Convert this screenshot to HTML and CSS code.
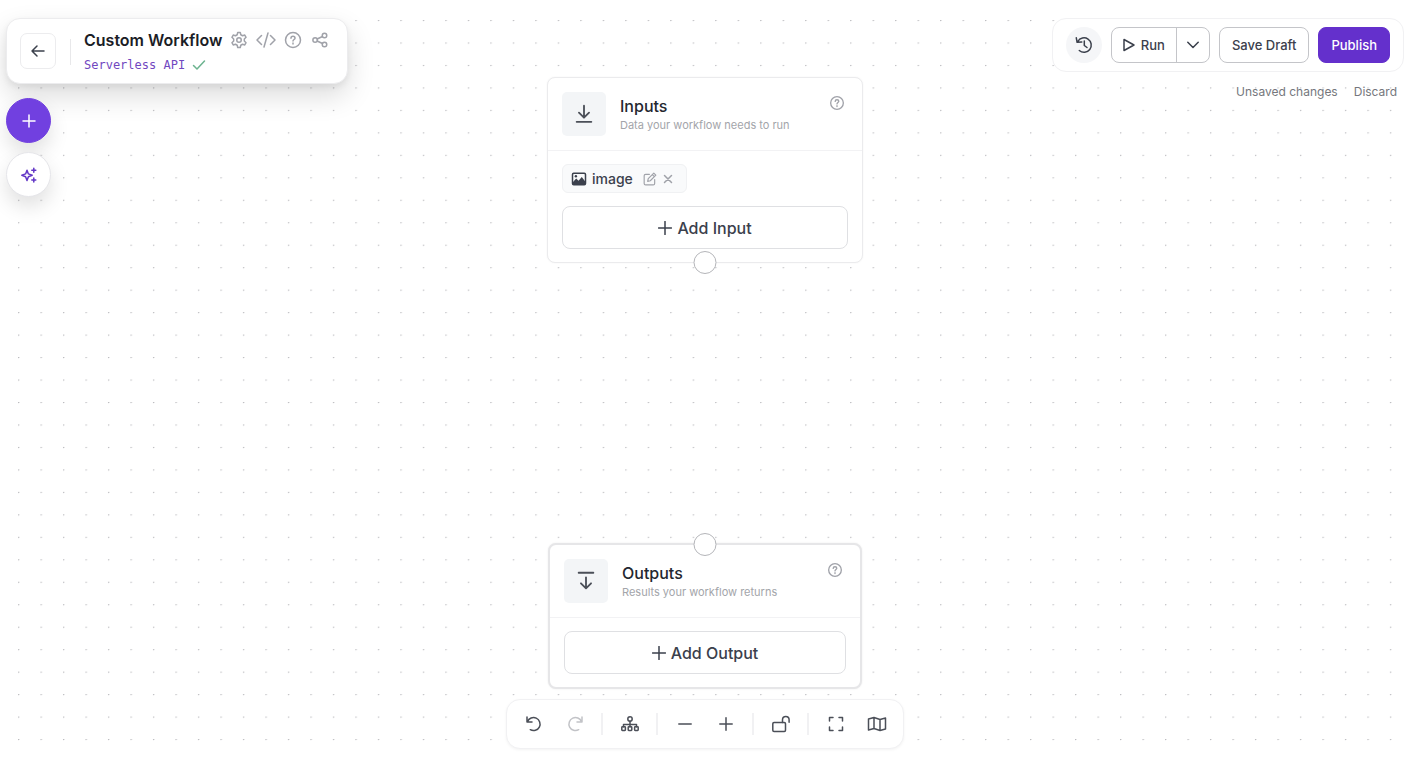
FILE: index.html
```html
<!DOCTYPE html>
<html lang="en">
<head>
<meta charset="utf-8">
<meta name="viewport" content="width=device-width, initial-scale=1">
<title>Custom Workflow</title>
<link rel="stylesheet" href="styles.css">
</head>
<body>
<main class="canvas">
  <svg class="grid" aria-hidden="true">
    <defs>
      <pattern id="dots" x="18" y="20" width="22.49" height="22.47" patternUnits="userSpaceOnUse">
        <circle cx="0.7" cy="0.5" r="0.7" fill="#b4b4b8"/>
      </pattern>
    </defs>
    <rect width="100%" height="100%" fill="url(#dots)"/>
  </svg>

  <section class="node node-inputs">
    <header class="node-head">
      <span class="node-icon">
        <svg width="22" height="22" viewBox="0 0 24 24"><path d="M12 3v12.500M6.500 10.500 12 16l5.500-5.500M4 20.500h16"/></svg>
      </span>
      <div class="node-title">
        <h2>Inputs</h2>
        <p>Data your workflow needs to run</p>
      </div>
      <button class="icon-btn help" aria-label="About inputs">
        <svg width="16" height="16" viewBox="0 0 24 24"><circle cx="12" cy="12" r="9.500"/><path d="M9.300 9.600c0-1.500 1.200-2.500 2.700-2.500s2.700 1 2.700 2.400c0 1.700-2.700 2-2.700 3.900M12 16v1.200"/></svg>
      </button>
    </header>
    <div class="node-body">
      <div class="chip">
        <svg class="chip-image" width="16" height="16" viewBox="0 0 16 16"><rect x="1.500" y="2.200" width="13" height="11.600" rx="1.200"/><path class="solid" d="M2 13v-2l3.200-3.500 2.300 2.200L10.800 6l3.400 4.500V13z"/><circle class="solid" cx="4.900" cy="5.300" r="1.200"/></svg>
        <span class="chip-name">image</span>
        <button class="icon-btn" aria-label="Edit image">
          <svg width="14" height="14" viewBox="0 0 24 24"><path d="M11 4H4.500A2.500 2.500 0 0 0 2 6.500v13A2.500 2.500 0 0 0 4.500 22h13a2.500 2.500 0 0 0 2.500-2.500V13M8 16l1-4.500L18.500 2 22 5.500 12.500 15zM16 4.500 19.500 8"/></svg>
        </button>
        <button class="icon-btn" aria-label="Remove image">
          <svg width="12" height="12" viewBox="0 0 12 12"><path d="m2.500 2.500 7 7m0-7-7 7"/></svg>
        </button>
      </div>
      <button class="add">
        <svg width="14" height="14" viewBox="0 0 14 14"><path d="M7 .5v13M.5 7h13"/></svg>Add Input
      </button>
    </div>
    <span class="handle handle-bottom"></span>
  </section>

  <section class="node node-outputs">
    <header class="node-head">
      <span class="node-icon">
        <svg width="22" height="22" viewBox="0 0 24 24"><path d="M4 3h16M12 8v11.500M6.500 14.500 12 20l5.500-5.500"/></svg>
      </span>
      <div class="node-title">
        <h2>Outputs</h2>
        <p>Results your workflow returns</p>
      </div>
      <button class="icon-btn help" aria-label="About outputs">
        <svg width="16" height="16" viewBox="0 0 24 24"><circle cx="12" cy="12" r="9.500"/><path d="M9.300 9.600c0-1.500 1.200-2.500 2.700-2.500s2.700 1 2.700 2.400c0 1.700-2.700 2-2.700 3.900M12 16v1.200"/></svg>
      </button>
    </header>
    <div class="node-body">
      <button class="add">
        <svg width="14" height="14" viewBox="0 0 14 14"><path d="M7 .5v13M.5 7h13"/></svg>Add Output
      </button>
    </div>
    <span class="handle handle-top"></span>
  </section>

  <div class="corner corner-left">
    <header class="panel title-panel">
      <button class="back" aria-label="Back">
        <svg width="16" height="16" viewBox="0 0 16 16"><path d="M14 8H2M7 3 2 8l5 5"/></svg>
      </button>
      <div class="title-text">
        <div class="title-row">
          <h1>Custom Workflow</h1>
          <button class="icon-btn" aria-label="Settings">
            <svg width="20" height="18" viewBox="0 0 24 24"><path d="M10.300 2h3.400l.7 3 2.300 1.300 3-.9 1.700 3-2.300 2.200v2.800l2.300 2.200-1.700 3-3-.9-2.300 1.300-.7 3h-3.400l-.7-3-2.300-1.300-3 .9-1.700-3 2.300-2.200v-2.800L2.600 8.400l1.700-3 3 .9L9.600 5z"/><circle cx="12" cy="12" r="3"/></svg>
          </button>
          <button class="icon-btn" aria-label="Code">
            <svg width="20" height="18" viewBox="0 0 20 18"><path d="M5.500 4.500 1 9l4.500 4.500M14.500 4.500 19 9l-4.500 4.500M12 2 8 16"/></svg>
          </button>
          <button class="icon-btn" aria-label="Help">
            <svg width="20" height="18" viewBox="0 0 24 24"><circle cx="12" cy="12" r="10"/><path d="M9.300 9.600c0-1.500 1.200-2.500 2.700-2.500s2.700 1 2.700 2.400c0 1.700-2.700 2-2.700 3.900M12 16v1.200"/></svg>
          </button>
          <button class="icon-btn" aria-label="Share">
            <svg width="20" height="18" viewBox="0 0 24 24"><circle cx="5.500" cy="12" r="3"/><circle cx="18" cy="6" r="3"/><circle cx="18" cy="18" r="3"/><path d="m8.200 10.700 7.100-3.400M8.200 13.300l7.100 3.400"/></svg>
          </button>
        </div>
        <a class="api" href="#api">Serverless API
          <svg width="14" height="12" viewBox="0 0 14 12"><path d="m1.500 6.500 3.500 3.500 7.500-8"/></svg>
        </a>
      </div>
    </header>
    <button class="round round-primary" aria-label="Add block">
      <svg width="14" height="14" viewBox="0 0 14 14"><path d="M7 1v12M1 7h12"/></svg>
    </button>
    <button class="round" aria-label="AI assistant">
      <svg width="18" height="18" viewBox="0 0 18 18"><path d="M7 4.200 8.400 7.900 12.200 9.300 8.400 10.700 7 14.500 5.600 10.700 1.800 9.300 5.600 7.900zM13.800 2.300v4M11.800 4.300h4M13.800 12v4M11.800 14h4"/></svg>
    </button>
  </div>

  <div class="corner corner-right">
    <div class="panel actions">
      <button class="history" aria-label="Version history">
        <svg width="18" height="18" viewBox="0 0 18 18"><path d="M2.800 5.500A7.200 7.200 0 1 1 4.300 14.500M1.300 1.800l.8 4.500 4.700-.2M9.300 5v4.500l2.700 2"/></svg>
      </button>
      <div class="split">
        <button class="split-main">
          <svg width="12" height="14" viewBox="0 0 12 14"><path d="M1 1.500v11L11 7z"/></svg>Run
        </button>
        <button class="split-more" aria-label="Run options">
          <svg width="12" height="8" viewBox="0 0 12 8"><path d="m.8 1.200 5.200 5.300 5.200-5.300"/></svg>
        </button>
      </div>
      <button class="btn">Save Draft</button>
      <button class="btn btn-primary">Publish</button>
    </div>
    <div class="status">
      <span>Unsaved changes</span>
      <button class="discard">Discard</button>
    </div>
  </div>

  <nav class="panel toolbar" aria-label="Canvas tools">
    <button class="tool" aria-label="Undo">
      <svg width="18" height="18" viewBox="0 0 18 18"><path d="M2 2v5h5M2.500 6.700A6.500 6.500 0 1 1 5.300 14.700"/></svg>
    </button>
    <button class="tool" aria-label="Redo" disabled>
      <svg width="18" height="18" viewBox="0 0 18 18"><path d="M16 2v5h-5M15.500 6.700A6.500 6.500 0 1 0 12.700 14.700"/></svg>
    </button>
    <span class="sep"></span>
    <button class="tool" aria-label="Arrange">
      <svg width="18" height="18" viewBox="0 0 18 18"><circle cx="9" cy="4" r="2.200"/><path d="M9 6.200v5.600M2.500 11.800V9.500h13v2.300"/><rect x=".8" y="11.800" width="3.600" height="3.600" rx=".6"/><rect x="7.200" y="11.800" width="3.600" height="3.600" rx=".6"/><rect x="13.600" y="11.800" width="3.600" height="3.600" rx=".6"/></svg>
    </button>
    <span class="sep"></span>
    <button class="tool" aria-label="Zoom out">
      <svg width="14" height="14" viewBox="0 0 14 14"><path d="M.8 7h12.400"/></svg>
    </button>
    <button class="tool" aria-label="Zoom in">
      <svg width="14" height="14" viewBox="0 0 14 14"><path d="M.8 7h12.400M7 .8v12.400"/></svg>
    </button>
    <span class="sep"></span>
    <button class="tool" aria-label="Lock">
      <svg width="18" height="18" viewBox="0 0 18 18"><rect x=".8" y="7.500" width="12.700" height="9" rx="1.200"/><path d="M10.500 7.500V4.800a3.300 3.300 0 0 1 6.600 0v2.500"/></svg>
    </button>
    <span class="sep"></span>
    <button class="tool" aria-label="Fit view">
      <svg width="16" height="16" viewBox="0 0 16 16"><path d="M1.500 5V1.500H5M11 1.500h3.500V5M14.500 11v3.500H11M5 14.500H1.500V11"/></svg>
    </button>
    <button class="tool" aria-label="Toggle map">
      <svg width="20" height="18" viewBox="0 0 20 18"><path d="M1.500 4 7 2.500l6 2L18.500 3v11L13 15.500l-6-2L1.500 15zM7 2.500v11M13 4.500v11"/></svg>
    </button>
  </nav>
</main>
</body>
</html>
```

FILE: styles.css
```css
* {
  box-sizing: border-box;
}

body {
  margin: 0;
  background: #fff;
  color: #3b404c;
  font: 14px/20px Inter, "Liberation Sans", sans-serif;
}

h1, h2, p {
  margin: 0;
}

button {
  margin: 0;
  padding: 0;
  border: 0;
  background: none;
  color: inherit;
  font: inherit;
  cursor: pointer;
}

svg {
  display: block;
  flex: none;
  fill: none;
  stroke: currentColor;
  stroke-width: 1.5;
  stroke-linecap: round;
  stroke-linejoin: round;
}

.canvas {
  position: relative;
  height: 100vh;
  overflow: hidden;
}

.grid {
  width: 100%;
  height: 100%;
  stroke: none;
}

.panel {
  display: flex;
  align-items: center;
  background: #fff;
  border: 1px solid #f1f1f3;
  border-radius: 14px;
}

.icon-btn {
  display: grid;
  place-items: center;
  color: #a0a2a9;
}

.icon-btn svg[viewBox="0 0 24 24"] {
  stroke-width: 2;
}

/* Floating corners */
.corner {
  position: absolute;
  top: 18px;
  display: flex;
  flex-direction: column;
}

.corner-left {
  left: 6px;
  align-items: flex-start;
}

.corner-right {
  right: 6px;
  align-items: flex-end;
}

.title-panel {
  align-items: flex-start;
  padding: 9px 17px 8px 13px;
  margin-bottom: 14px;
  border-color: #ececee;
  box-shadow: 0 12px 28px rgba(0, 0, 0, 0.14), 0 3px 6px rgba(0, 0, 0, 0.06);
}

.back {
  display: grid;
  place-items: center;
  width: 36px;
  height: 36px;
  margin-top: 5px;
  border: 1px solid #ececee;
  border-radius: 7px;
}

.title-text {
  margin-left: 14px;
  padding-left: 14px;
  background: linear-gradient(#e8e8ea, #e8e8ea) left center / 1px 26px no-repeat;
}

.title-row {
  display: flex;
  align-items: center;
  gap: 7px;
  height: 24px;
}

h1 {
  color: #1b1d26;
  font-size: 16px;
  line-height: 24px;
  font-weight: 600;
}

.api {
  display: flex;
  align-items: center;
  gap: 7px;
  margin-top: 3px;
  color: #7148bf;
  font-family: "DejaVu Sans Mono", monospace;
  font-size: 12px;
  line-height: 20px;
  text-decoration: none;
}

.api svg {
  color: #6cb38f;
}

.round {
  display: grid;
  place-items: center;
  width: 45px;
  height: 45px;
  margin-bottom: 9px;
  border: 1px solid #e6e6ea;
  border-radius: 50%;
  background: #fff;
  color: #6236c6;
  box-shadow: 0 10px 20px rgba(0, 0, 0, 0.12);
}

.round-primary {
  border-color: #7140e0;
  background: #7140e0;
  color: #fff;
}

.actions {
  gap: 9px;
  padding: 8px 13px;
}

.history {
  display: grid;
  place-items: center;
  width: 36px;
  height: 36px;
  border-radius: 50%;
  background: #f5f6f8;
}

.split {
  display: flex;
  height: 36px;
  border: 1px solid #c4c5c9;
  border-radius: 8px;
  font-size: 13px;
  font-weight: 500;
}

.split-main {
  display: flex;
  align-items: center;
  gap: 6px;
  padding: 0 11px;
}

.split-more {
  display: grid;
  place-items: center;
  width: 33px;
  border-left: 1px solid #c4c5c9;
}

.btn {
  height: 36px;
  padding: 0 12px;
  border: 1px solid #c4c5c9;
  border-radius: 8px;
  font-size: 13px;
  font-weight: 500;
}

.btn-primary {
  border-color: #6430cc;
  background: #6430cc;
  color: #fff;
}

.status {
  display: flex;
  gap: 16px;
  padding: 10px 7px 0 0;
  color: #75777d;
  font-size: 12px;
}

/* Nodes on the canvas */
.node {
  position: absolute;
  left: 50%;
  transform: translateX(-50%);
  background: #fff;
  border-radius: 8px;
}

.node-inputs {
  top: 77px;
  width: 316px;
  border: 1px solid #ebebed;
  box-shadow: 0 0 2px rgba(0, 0, 0, 0.05);
}

.node-outputs {
  top: 543px;
  width: 314px;
  border: 2px solid #e6e6e8;
  box-shadow: 0 0 2px rgba(0, 0, 0, 0.08);
}

.node-head {
  display: flex;
  gap: 14px;
  padding: 14px;
  border-bottom: 1px solid #f2f2f4;
}

.node-icon {
  display: grid;
  place-items: center;
  width: 44px;
  height: 44px;
  border-radius: 5px;
  background: #f3f5f7;
  color: #4b4f58;
}

.node-icon svg {
  stroke-width: 2;
}

.node-title {
  flex: 1;
  padding-top: 4px;
}

h2 {
  color: #24272f;
  font-size: 16px;
  line-height: 20px;
  font-weight: 500;
}

.node-title p {
  color: #a3a5aa;
  font-size: 11px;
  line-height: 18px;
}

.help {
  align-self: flex-start;
  margin: 3px 3px 0 0;
}

.node-body {
  display: flex;
  flex-direction: column;
  align-items: flex-start;
  gap: 13px;
  padding: 13px 14px;
}

.chip {
  display: flex;
  align-items: center;
  gap: 5px;
  height: 29px;
  padding: 0 12px 0 8px;
  border: 1px solid #f0f1f3;
  border-radius: 6px;
  background: #f9fafb;
}

.chip-name {
  margin-right: 5px;
  font-weight: 500;
}

.chip-image .solid {
  fill: currentColor;
  stroke: none;
}

.add {
  display: flex;
  align-items: center;
  justify-content: center;
  gap: 5px;
  width: 100%;
  height: 43px;
  border: 1px solid #dfe0e3;
  border-radius: 8px;
  font-size: 16px;
  font-weight: 500;
}

.handle {
  position: absolute;
  left: 50%;
  width: 23px;
  height: 23px;
  transform: translateX(-50%);
  border: 1px solid #b4b5b9;
  border-radius: 50%;
  background: #fff;
}

.handle-bottom {
  bottom: -12px;
}

.handle-top {
  top: -12px;
}

/* Bottom toolbar */
.toolbar {
  position: absolute;
  bottom: 9px;
  left: 50%;
  transform: translateX(-50%);
  padding: 4px 6px;
  color: #4b4f58;
  box-shadow: 0 1px 3px rgba(0, 0, 0, 0.05);
}

.tool {
  display: grid;
  place-items: center;
  width: 41px;
  height: 40px;
}

.tool:disabled {
  color: #c2c3c7;
  cursor: default;
}

.sep {
  width: 2px;
  height: 22px;
  margin: 0 6px;
  background: #f1f1f3;
}
```
